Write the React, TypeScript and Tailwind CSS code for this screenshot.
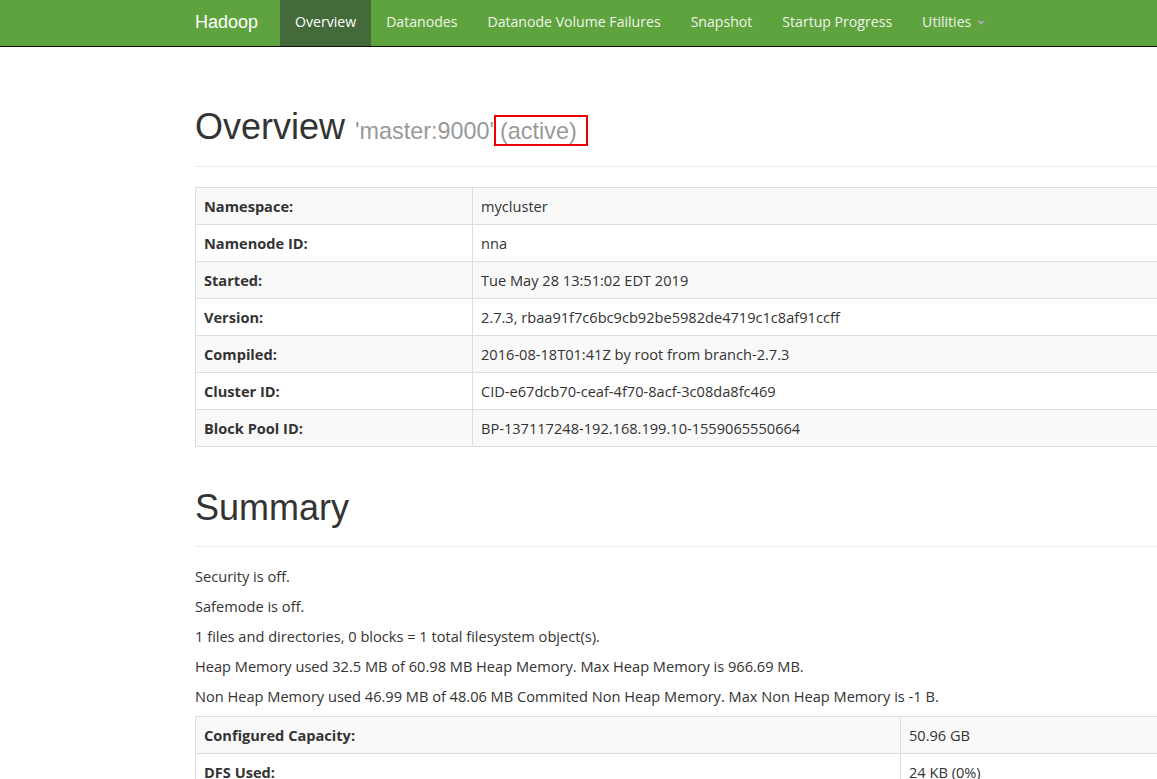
import React from "react";

const overviewRows: [string, string][] = [
  ["Namespace:", "mycluster"],
  ["Namenode ID:", "nna"],
  ["Started:", "Tue May 28 13:51:02 EDT 2019"],
  ["Version:", "2.7.3, rbaa91f7c6bc9cb92be5982de4719c1c8af91ccff"],
  ["Compiled:", "2016-08-18T01:41Z by root from branch-2.7.3"],
  ["Cluster ID:", "CID-e67dcb70-ceaf-4f70-8acf-3c08da8fc469"],
  ["Block Pool ID:", "BP-137117248-192.168.199.10-1559065550664"],
];

const summaryLines = [
  "Security is off.",
  "Safemode is off.",
  "1 files and directories, 0 blocks = 1 total filesystem object(s).",
  "Heap Memory used 32.5 MB of 60.98 MB Heap Memory. Max Heap Memory is 966.69 MB.",
  "Non Heap Memory used 46.99 MB of 48.06 MB Commited Non Heap Memory. Max Non Heap Memory is -1 B.",
];

const capacityRows: [string, string][] = [
  ["Configured Capacity:", "50.96 GB"],
  ["DFS Used:", "24 KB (0%)"],
  ["Non DFS Used:", "7.23 GB"],
];

const navLinks = ["Overview", "Datanodes", "Datanode Volume Failures", "Snapshot", "Startup Progress"];

function InfoTable({ rows, labelWidth }: { rows: [string, string][]; labelWidth: string }) {
  return (
    <table className="mb-5 w-full border-collapse border border-[#ddd]">
      <tbody>
        {rows.map(([k, v], i) => (
          <tr key={k} className={i % 2 === 0 ? "bg-[#f9f9f9]" : "bg-white"}>
            <th className={`${labelWidth} border border-[#ddd] p-2 text-left font-bold`}>{k}</th>
            <td className="border border-[#ddd] p-2">{v}</td>
          </tr>
        ))}
      </tbody>
    </table>
  );
}

export default function App() {
  return (
    <div className="h-[779px] w-[1157px] overflow-hidden bg-white text-[14.6px] leading-5 text-[#333] [font-family:'Open_Sans','Liberation_Sans',sans-serif]">
      <nav className="h-[47px] border-b border-[#111] bg-[#5fa33e]">
        <div className="ml-[180px] flex h-[46px] items-stretch">
          <div className="flex w-[100px] items-center pb-[3px] pl-[15px] text-[18px] text-white [font-family:'Liberation_Sans',sans-serif]">
            Hadoop
          </div>
          <ul className="flex items-stretch text-[14.1px]">
            {navLinks.map((l, i) => (
              <li
                key={l}
                className={`flex items-center px-[15px] pb-[3px] ${i === 0 ? "bg-[#44693a] text-white" : "text-[#eef5ea]"}`}
              >
                {l}
              </li>
            ))}
            <li className="flex items-center gap-[6px] px-[15px] pb-[3px] text-[#eef5ea]">
              Utilities
              <span className="mt-[2px] h-0 w-0 border-x-[4px] border-t-[4px] border-x-transparent border-t-[#a8a8a8]" />
            </li>
          </ul>
        </div>
      </nav>

      <div className="ml-[180px] w-[1170px] px-[15px]">
        <div className="mt-[60px] mb-5 border-b border-[#eee] pb-[9px]">
          <h1 className="mb-[10px] text-[36px] leading-[40px] text-[#333] [font-family:'Liberation_Sans',sans-serif]">
            Overview{" "}
            <span className="text-[23.4px] leading-none text-[#999]">'master:9000'</span>
            <span className="relative text-[23.4px] leading-none text-[#999]">
              <span className="pl-[6px] pr-[11px]">(active)</span>
              <span className="absolute -top-[3px] left-0 h-[31px] w-[94px] border-2 border-[#e00]" />
            </span>
          </h1>
        </div>

        <InfoTable rows={overviewRows} labelWidth="w-[277px]" />

        <div className="mt-[41px] mb-[19px] border-b border-[#eee] pb-[8px]">
          <h1 className="mb-[10px] text-[36px] leading-[40px] text-[#333] [font-family:'Liberation_Sans',sans-serif]">
            Summary
          </h1>
        </div>

        {summaryLines.map((s) => (
          <p key={s} className="mb-[10px]">
            {s}
          </p>
        ))}

        <InfoTable rows={capacityRows} labelWidth="w-[705px]" />
      </div>
    </div>
  );
}
